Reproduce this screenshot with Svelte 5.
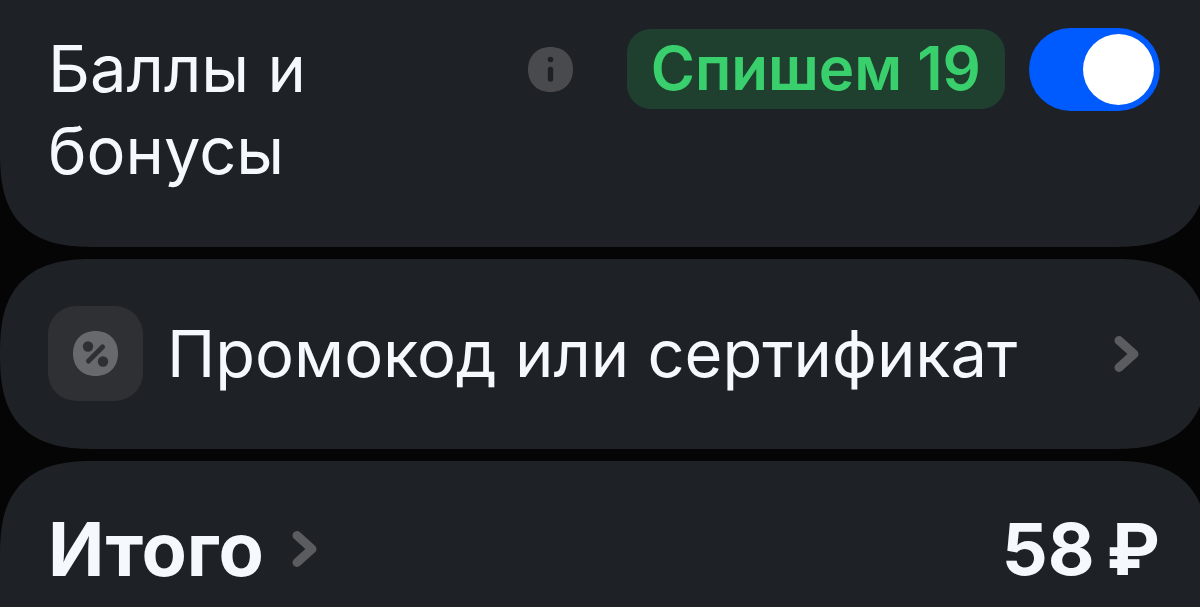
<script lang="ts">
  let usePoints = $state(true);
  const pointsToSpend = 19;
  const total = 58;
</script>

{#snippet chevron()}
  <svg class="chevron" viewBox="0 0 26 38" width="26" height="38" aria-hidden="true">
    <path d="M5 5.5L20 19L5 32.5" />
  </svg>
{/snippet}

<main class="checkout">
  <section class="card points">
    <label class="points-title" for="use-points">Баллы и бонусы</label>
    <button class="info" type="button" aria-label="Подробнее о баллах">
      <svg viewBox="0 0 45 45" width="45" height="45" aria-hidden="true">
        <path
          d="M22.5 0C36 0 45 9 45 22.5S36 45 22.5 45 0 36 0 22.5 9 0 22.5 0Z"
          fill="#494a4e"
        />
        <circle cx="22.5" cy="12.5" r="2.8" fill="#1e2025" />
        <path d="M22.5 22.5v9.5" stroke="#1e2025" stroke-width="5.4" stroke-linecap="round" />
      </svg>
    </button>
    <span class="badge">Спишем {pointsToSpend}</span>
    <input id="use-points" class="switch" type="checkbox" role="switch" bind:checked={usePoints} />
  </section>

  <button class="card promo" type="button">
    <span class="promo-icon">
      <svg viewBox="0 0 45 45" width="45" height="45" aria-hidden="true">
        <path
          d="M22.5 0C36 0 45 9 45 22.5S36 45 22.5 45 0 36 0 22.5 9 0 22.5 0Z"
          fill="#67696c"
        />
        <path d="M15.5 30L29.5 16" stroke="#2e3034" stroke-width="5" stroke-linecap="round" />
        <circle cx="15" cy="15.5" r="5.2" fill="#2e3034" />
        <circle cx="30" cy="30.5" r="5.2" fill="#2e3034" />
      </svg>
    </span>
    <span class="promo-title">Промокод или сертификат</span>
    {@render chevron()}
  </button>

  <section class="card total">
    <button class="total-title" type="button">
      Итого
      {@render chevron()}
    </button>
    <strong class="sum"><span>{total}</span><span>₽</span></strong>
  </section>
</main>

<style>
  :global(body) {
    margin: 0;
    overflow: hidden;
    background: #050505;
  }

  .checkout {
    display: flex;
    flex-direction: column;
    gap: 12px;
    min-height: 100vh;
    /* cards run slightly past the right edge */
    margin-right: -8px;
    color: #f5f8fc;
    font-family: Inter, sans-serif;
    font-size: 65px;
    line-height: 82px;
  }

  button {
    border: 0;
    padding: 0;
    background: none;
    color: inherit;
    font: inherit;
    text-align: left;
    cursor: pointer;
  }

  .card {
    display: flex;
    box-sizing: border-box;
    width: 100%;
    border-radius: 84px;
    background: #1e2125;
  }

  .points {
    align-items: flex-start;
    padding: 28px 48px 55px 48px;
    border-top-left-radius: 0;
    border-top-right-radius: 0;
  }

  .points-title {
    width: 320px;
    margin-right: auto;
  }

  .info {
    display: flex;
    margin: 19px 54px 0 0;
  }

  .info svg,
  .promo-icon svg,
  .chevron {
    display: block;
    flex: none;
  }

  .badge {
    flex: none;
    height: 80px;
    margin: 1px 24px 0 0;
    padding: 0 24px;
    border-radius: 24px;
    background: #1f402f;
    color: #38cf6c;
    font-size: 60px;
    font-weight: 600;
    line-height: 78px;
  }

  .switch {
    flex: none;
    width: 131px;
    height: 83px;
    margin: 0;
    padding: 6px;
    box-sizing: border-box;
    border-radius: 42px;
    appearance: none;
    background: #494a4e;
    cursor: pointer;
  }

  .switch::before {
    display: block;
    width: 71px;
    height: 71px;
    border-radius: 50%;
    background: #fff;
    content: '';
  }

  .switch:checked {
    background: #005bff;
  }

  .switch:checked::before {
    margin-left: auto;
  }

  .promo {
    align-items: center;
    gap: 24px;
    padding: 47px 68px 48px 48px;
  }

  .promo-icon {
    display: flex;
    flex: none;
    align-items: center;
    justify-content: center;
    width: 95px;
    height: 95px;
    border-radius: 28px;
    background: #2e3034;
  }

  .promo-title {
    flex: 1;
    line-height: 78px;
    white-space: nowrap;
  }

  .chevron {
    fill: none;
    stroke: #5a5c60;
    stroke-width: 9px;
    stroke-linecap: round;
    stroke-linejoin: round;
  }

  .total {
    flex: 1;
    align-items: flex-start;
    justify-content: space-between;
    padding: 47px 48px 16px 48px;
    border-bottom-right-radius: 0;
    border-bottom-left-radius: 0;
    font-size: 74px;
    font-weight: 700;
  }

  .total-title {
    display: flex;
    align-items: center;
    gap: 28px;
  }

  .sum {
    display: flex;
    gap: 12px;
    font-size: 72px;
    font-weight: 700;
  }

  @supports (corner-shape: superellipse(1.4)) {
    .card {
      border-radius: 95px;
      corner-shape: superellipse(1.4);
    }

    .points {
      border-top-left-radius: 0;
      border-top-right-radius: 0;
    }

    .total {
      border-bottom-right-radius: 0;
      border-bottom-left-radius: 0;
    }
  }
</style>
